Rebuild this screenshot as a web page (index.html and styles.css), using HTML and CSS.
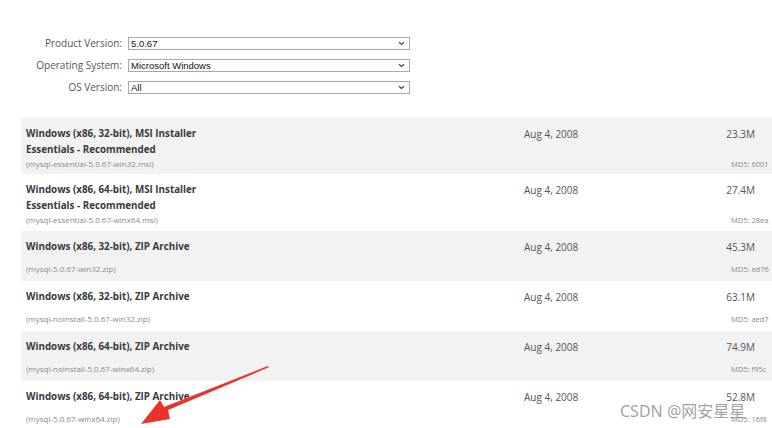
FILE: index.html
```html
<!DOCTYPE html>
<html>
<head>
<meta charset="utf-8">
<link rel="stylesheet" href="styles.css">
</head>
<body>
<div class="page">
  <div class="form">
    <div class="label">Product Version:</div>
    <div class="select"><span>5.0.67</span><svg class="chev" width="7" height="5" viewBox="0 0 7 5"><path d="M1 1.2 L3.5 3.5 L6 1.2" fill="none" stroke="#444" stroke-width="1.2"/></svg></div>
    <div class="label">Operating System:</div>
    <div class="select"><span>Microsoft Windows</span><svg class="chev" width="7" height="5" viewBox="0 0 7 5"><path d="M1 1.2 L3.5 3.5 L6 1.2" fill="none" stroke="#444" stroke-width="1.2"/></svg></div>
    <div class="label">OS Version:</div>
    <div class="select"><span>All</span><svg class="chev" width="7" height="5" viewBox="0 0 7 5"><path d="M1 1.2 L3.5 3.5 L6 1.2" fill="none" stroke="#444" stroke-width="1.2"/></svg></div>
  </div>

  <div class="table">
    <div class="row gray double">
      <div class="title">Windows (x86, 32-bit), MSI Installer<br>Essentials - Recommended</div>
      <div class="date">Aug 4, 2008</div>
      <div class="size">23.3M</div>
      <div class="file">(mysql-essential-5.0.67-win32.msi)</div>
      <div class="md5">MD5: 6001</div>
    </div>
    <div class="row double tall">
      <div class="title">Windows (x86, 64-bit), MSI Installer<br>Essentials - Recommended</div>
      <div class="date">Aug 4, 2008</div>
      <div class="size">27.4M</div>
      <div class="file">(mysql-essential-5.0.67-winx64.msi)</div>
      <div class="md5">MD5: 28ea</div>
    </div>
    <div class="row gray">
      <div class="title">Windows (x86, 32-bit), ZIP Archive</div>
      <div class="date">Aug 4, 2008</div>
      <div class="size">45.3M</div>
      <div class="file">(mysql-5.0.67-win32.zip)</div>
      <div class="md5">MD5: ed76</div>
    </div>
    <div class="row">
      <div class="title">Windows (x86, 32-bit), ZIP Archive</div>
      <div class="date">Aug 4, 2008</div>
      <div class="size">63.1M</div>
      <div class="file">(mysql-noinstall-5.0.67-win32.zip)</div>
      <div class="md5">MD5: aed7</div>
    </div>
    <div class="row gray">
      <div class="title">Windows (x86, 64-bit), ZIP Archive</div>
      <div class="date">Aug 4, 2008</div>
      <div class="size">74.9M</div>
      <div class="file">(mysql-noinstall-5.0.67-winx64.zip)</div>
      <div class="md5">MD5: f95c</div>
    </div>
    <div class="row">
      <div class="title">Windows (x86, 64-bit), ZIP Archive</div>
      <div class="date">Aug 4, 2008</div>
      <div class="size">52.8M</div>
      <div class="file">(mysql-5.0.67-winx64.zip)</div>
      <div class="md5">MD5: 16f8</div>
    </div>
  </div>

  <svg class="arrow" width="130" height="62" viewBox="0 0 130 62">
    <polygon points="128,2 128.7,3.3 28,46 30,55 1,60 20,36 24,43" fill="#e8322b"/>
  </svg>
  <div class="watermark">CSDN @网安星星</div>
</div>
</body>
</html>
```

FILE: styles.css
```css
html, body {
  margin: 0;
  padding: 0;
  background: #ffffff;
}
.page {
  position: relative;
  width: 772px;
  height: 428px;
  overflow: hidden;
  font-family: "Open Sans", "Liberation Sans", sans-serif;
}
.form {
  display: grid;
  grid-template-columns: 122px 282px;
  column-gap: 6px;
  row-gap: 9px;
  padding-top: 37px;
  align-items: center;
}
.label {
  text-align: right;
  font-size: 10px;
  color: #555555;
  line-height: 13px;
}
.select {
  box-sizing: border-box;
  height: 13px;
  border: 1px solid #a9a9a9;
  background: #ffffff;
  display: flex;
  align-items: center;
  justify-content: space-between;
  padding: 0 4px 0 2px;
  font-family: "Liberation Sans", Arial, sans-serif;
  font-size: 9.5px;
  color: #111111;
}
.select span {
  line-height: 11px;
}
.chev {
  display: block;
}
.table {
  margin-top: 24px;
  margin-left: 21px;
  width: 760px;
}
.row {
  box-sizing: border-box;
  height: 50px;
  padding-top: 8px;
  display: grid;
  grid-template-columns: 498px 176px 55px 1fr;
  grid-template-rows: 24px 12px;
  padding-left: 5px;
}
.row.double {
  height: 56px;
  grid-template-rows: 32px 12px;
}
.row.tall {
  height: 57px;
}
.row.gray {
  background: #f2f2f2;
}
.title {
  font-weight: 700;
  font-size: 9.8px;
  line-height: 16px;
  color: #3a3a3a;
}
.date {
  font-size: 10px;
  line-height: 16px;
  color: #555555;
}
.size {
  font-size: 10px;
  line-height: 16px;
  color: #555555;
  text-align: right;
}
.file {
  grid-column: 1 / 3;
  font-size: 8px;
  line-height: 12px;
  color: #8a8a8a;
}
.md5 {
  grid-column: 3 / 5;
  padding-left: 31px;
  font-size: 7.5px;
  line-height: 12px;
  color: #8a8a8a;
  white-space: nowrap;
}
.arrow {
  position: absolute;
  left: 140px;
  top: 364px;
}
.watermark {
  position: absolute;
  left: 620px;
  top: 398px;
  font-family: "Noto Sans", "Noto Sans CJK SC", sans-serif;
  font-size: 16px;
  color: rgba(120, 120, 120, 0.7);
  white-space: nowrap;
}
```
